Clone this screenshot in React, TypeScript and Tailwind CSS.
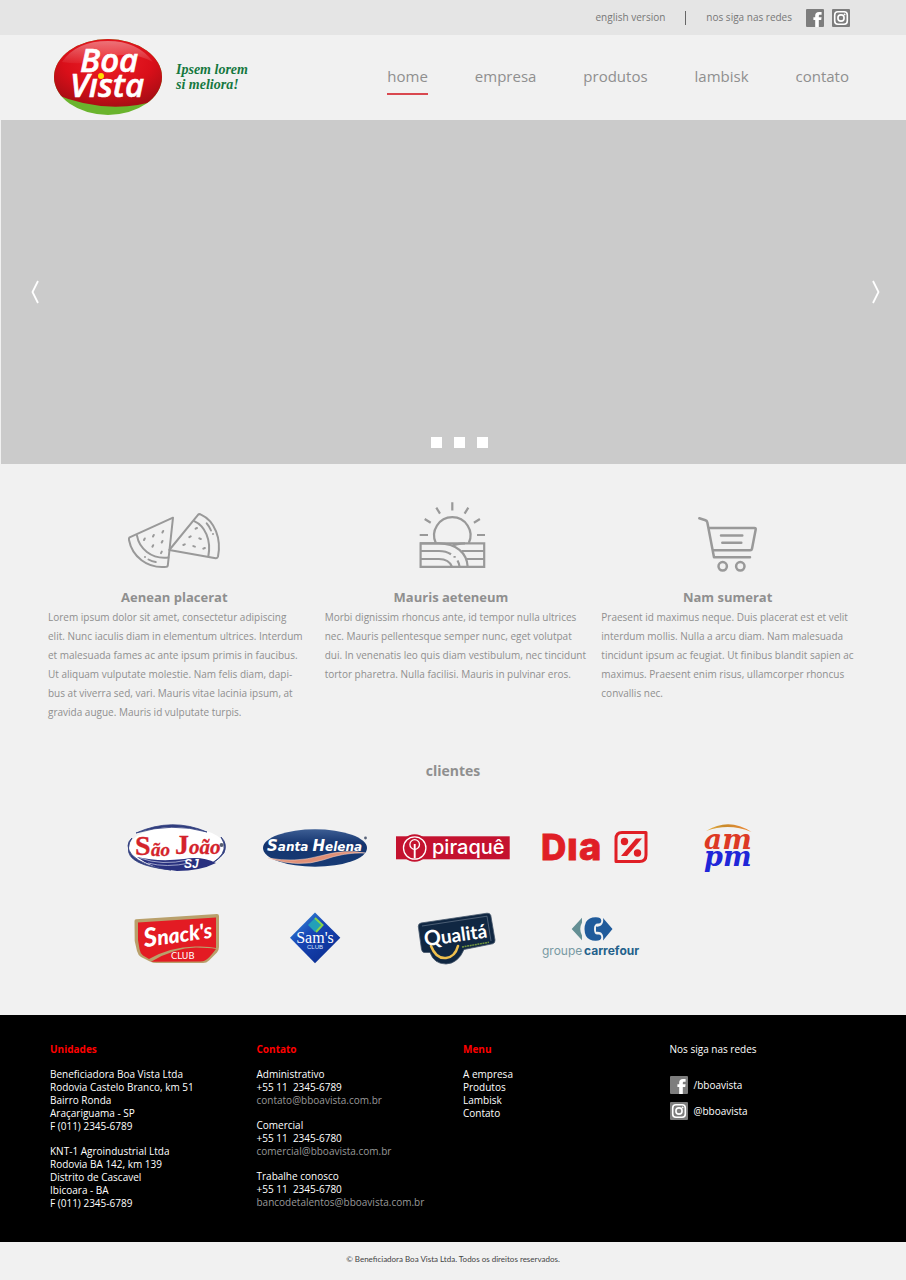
import React from "react";

function FacebookIcon() {
  return (
    <svg viewBox="0 0 18 18" className="size-[18px]" aria-hidden="true">
      <rect width="18" height="18" rx="1" fill="#7d7d7d" />
      <path d="M9.2 18V10.9H7.4V8.2H9.2V6.6C9.2 4.1 10.6 2.9 12.9 2.9H15.6V5.7H14C13.1 5.7 12.8 6.1 12.8 6.9V8.2H15.6L15.2 10.9H12.8V18Z" fill="#fff" />
    </svg>
  );
}

function InstagramIcon() {
  return (
    <svg viewBox="0 0 18 18" className="size-[18px]" aria-hidden="true">
      <rect width="18" height="18" rx="1" fill="#7d7d7d" />
      <rect x="2.7" y="2.7" width="12.6" height="12.6" rx="3.2" fill="none" stroke="#fff" strokeWidth="1.6" />
      <circle cx="9" cy="9" r="3.1" fill="none" stroke="#fff" strokeWidth="1.6" />
      <circle cx="12.6" cy="5.4" r="0.9" fill="#fff" />
    </svg>
  );
}

function BrandLogo() {
  return (
    <svg viewBox="53 38 110 78" className="h-[78px] w-[110px]" role="img" aria-label="Boa Vista">
      <defs>
        <radialGradient id="brandRed" cx="0.5" cy="0.35" r="0.65">
          <stop offset="0" stopColor="#ee2028" />
          <stop offset="0.6" stopColor="#d90f19" />
          <stop offset="1" stopColor="#a90d14" />
        </radialGradient>
        <linearGradient id="brandShine" x1="0" y1="0" x2="0" y2="1">
          <stop offset="0" stopColor="#fff" stopOpacity="0.4" />
          <stop offset="1" stopColor="#fff" stopOpacity="0.05" />
        </linearGradient>
        <clipPath id="brandClip">
          <ellipse cx="108" cy="77" rx="54" ry="38" />
        </clipPath>
      </defs>
      <g clipPath="url(#brandClip)">
        <rect x="53" y="38" width="110" height="78" fill="#6ab42d" />
        <path d="M50 35H166V98Q108 118 50 92Z" fill="url(#brandRed)" />
        <path d="M62 62Q76 41 108 41Q138 41 153 62Q130 50 108 58Q84 66 62 62Z" fill="url(#brandShine)" />
      </g>
      <text fill="#fff" className="font-['Open_Sans',sans-serif] font-semibold italic" stroke="#fff" strokeWidth="0.6">
        <tspan x="80" y="72" fontSize="33">Boa</tspan>
        <tspan x="70" y="97" fontSize="33">Vısta</tspan>
      </text>
      <circle cx="101" cy="76" r="3" fill="#ffe100" />
    </svg>
  );
}

function WatermelonIcon() {
  return (
    <svg viewBox="125 510 98 62" className="h-[62px] w-[98px]" fill="none" stroke="#999" strokeWidth="2" strokeLinecap="round" strokeLinejoin="round" aria-hidden="true">
      <path d="M173 517.7L129.6 537.4Q128.6 538.2 129 540C132 556 147 569 166.5 566.8Q167.6 566.6 167.8 565.5Z" />
      <path d="M137 535.7C139 548 151 559.5 168.3 557.5" />
      <path d="M144.8 538.5L144 540M153.8 535L153 536.5M163.2 531L162.4 532.5M153.2 545.2L152.4 546.7M162.5 541L161.7 542.5M161.8 551.6L161 553.1M145 557V557.1M148.5 559.5Q152 561.5 155.7 562.1" />
      <path d="M169.3 550L198 514.8Q199.2 513.6 201 514.6C215 521 221.5 539 218 556.5Q217.5 558.4 215.7 558.2Z" />
      <path d="M194.2 521.2C205 526 211.5 540 208.3 556.5" />
      <path d="M195.6 528.7L197 528M189.3 537.1L190.7 536.4M199.3 538.3L200.8 539M183.3 545L184.8 544.4M193.3 546.1L194.9 546.6M203.3 548.7L204.9 548M206.7 523.3Q209.5 526.5 211 530.5M213 534V534.1" />
    </svg>
  );
}

function SunriseFieldIcon() {
  return (
    <svg viewBox="415 500 73 72" className="h-[72px] w-[73px]" fill="none" stroke="#999" strokeWidth="2.2" aria-hidden="true">
      <path d="M436.8 543A18.2 18.2 0 1 1 469.8 543" />
      <path d="M420.7 535H429M478 535H486M453.3 502.3V510.5M437.3 507.7L441 513.7M469.3 507.7L465.6 513.7M425.7 519L431.7 522.7M480.9 519L474.9 522.7" />
      <path d="M421.6 543.3H485.2V566.8H421.6Z" />
      <path d="M421 543.3H440C457 543.3 468 553 468.7 566.8M452.5 546Q458 543.3 466 543.3" />
      <path d="M421 551H440Q447 551 452 554.2M455.6 556V557.8M458.5 560.5Q460.2 563.5 460.5 566.5M421 559H440Q450 559 453 566.8M462.5 551H485M467.5 559H485" />
    </svg>
  );
}

function CartIcon() {
  return (
    <svg viewBox="696 514 63 58" className="h-[58px] w-[63px]" fill="none" stroke="#999" strokeWidth="2.5" strokeLinecap="round" strokeLinejoin="round" aria-hidden="true">
      <path d="M699.3 518.3L705.5 520.2Q706.9 520.7 707.3 522.2L714 557.3H750M709 528H754.5Q756 528 755.7 529.5L752 548.8Q751.7 550.3 750.2 550.3H713M721 535.4H742.3M722.3 542.8H741.3" />
      <circle cx="722.7" cy="566.3" r="4.2" />
      <circle cx="740.3" cy="566.3" r="4.2" />
    </svg>
  );
}

function SaoJoaoLogo() {
  return (
    <svg viewBox="125 823 105 50" className="h-[50px] w-[105px]" role="img" aria-label="São João">
      <ellipse cx="177.3" cy="848.3" rx="49" ry="21.5" fill="#fff" />
      <path d="M136 833Q172 817 207 832Q172 822 136 833ZM132 838Q124 845 132 855Q144 867 171 870Q126 865 128.5 848Q129 842 132 838ZM221 837Q228 844 224 853Q217 862 206 866Q222 859 224 849Q225 843 221 837Z" fill="#303d7e" stroke="#303d7e" strokeWidth="0.8" />
      <path d="M137 857Q158 862 184 859Q202 856 216 863Q200 871 177 871Q152 869 137 857Z" fill="#29317f" />
      <path d="M140 858Q162 866 188 860M148 863Q166 868 190 863" stroke="#cfd2e8" strokeWidth="0.7" fill="none" />
      <text className="font-['Liberation_Serif',serif] font-bold" fill="#d4232b" stroke="#d4232b" strokeWidth="0.3">
        <tspan x="135" y="855" fontSize="28">S</tspan>
        <tspan x="151" y="856" fontSize="19" className="italic">ão</tspan>
        <tspan x="175" y="854" fontSize="28">J</tspan>
        <tspan x="189" y="854" fontSize="21" className="italic">oão</tspan>
      </text>
      <text x="184" y="868" fontSize="12" fill="#fff" className="font-['Liberation_Sans',sans-serif] font-bold italic">SJ</text>
      <circle cx="221.5" cy="845" r="2" fill="#596072" />
    </svg>
  );
}

function SantaHelenaLogo() {
  return (
    <svg viewBox="261 827 108 42" className="h-[42px] w-[108px]" role="img" aria-label="Santa Helena">
      <defs>
        <linearGradient id="helenaBlue" x1="0" y1="0" x2="0" y2="1">
          <stop offset="0" stopColor="#3d5e94" />
          <stop offset="0.4" stopColor="#14346e" />
          <stop offset="1" stopColor="#173b75" />
        </linearGradient>
      </defs>
      <ellipse cx="315" cy="848" rx="52" ry="18.8" fill="url(#helenaBlue)" />
      <path d="M268 858Q295 863 320 856Q345 849 365 853Q345 852 323 860Q298 868 268 858Z" fill="#e09077" stroke="#f4d9cf" strokeWidth="0.5" />
      <text x="267" y="851" className="font-['DejaVu_Sans',sans-serif] font-bold italic" fill="#fff" fontSize="12">
        <tspan fontSize="15">S</tspan>anta <tspan fontSize="15">H</tspan>elena
      </text>
      <circle cx="365.5" cy="838" r="1.4" fill="#59647a" />
    </svg>
  );
}

function PiraqueLogo() {
  return (
    <svg viewBox="395 832 116 32" className="h-[32px] w-[116px]" role="img" aria-label="piraquê">
      <rect x="396" y="836.3" width="113.7" height="23" fill="#c4122f" />
      <circle cx="414.7" cy="848" r="13.8" fill="#c4122f" />
      <circle cx="414.7" cy="848" r="11.2" fill="none" stroke="#fff" strokeWidth="1.3" />
      <circle cx="414.7" cy="844.5" r="4.8" fill="none" stroke="#fff" strokeWidth="1.3" />
      <path d="M414.7 844V858.5" stroke="#fff" strokeWidth="1.9" />
      <text x="432" y="853.5" fontSize="20" fill="#fff" className="font-['Inter',sans-serif] font-medium">piraquê</text>
    </svg>
  );
}

function DiaLogo() {
  return (
    <svg viewBox="532 818 118 60" className="h-[60px] w-[118px]" role="img" aria-label="Dia">
      <text className="font-['Inter',sans-serif] font-extrabold" fill="#e01f26" stroke="#e01f26" strokeWidth="0.8">
        <tspan x="541" y="860" fontSize="35">D</tspan>
        <tspan x="567" y="860" fontSize="38">ı</tspan>
        <tspan x="579" y="860" fontSize="38">a</tspan>
      </text>
      <path d="M622 832.5H646V855Q646 861.5 639.5 861.5H616V839Q616 832.5 622 832.5Z" fill="none" stroke="#e01f26" strokeWidth="3" strokeLinejoin="round" />
      <path d="M636 838.5H642L627 856H621Z" fill="#e01f26" />
      <circle cx="624.5" cy="841.5" r="3.7" fill="#e01f26" />
      <circle cx="637.5" cy="853" r="3.7" fill="#e01f26" />
    </svg>
  );
}

function AmpmLogo() {
  return (
    <svg viewBox="702 822 54 52" className="h-[52px] w-[54px]" role="img" aria-label="am pm">
      <defs>
        <linearGradient id="arcGold" x1="0" y1="0" x2="1" y2="0">
          <stop offset="0" stopColor="#eab54a" />
          <stop offset="0.4" stopColor="#c98a2b" />
          <stop offset="1" stopColor="#f08a3a" />
        </linearGradient>
      </defs>
      <path d="M706 831Q729 817 751.5 832Q729 822.5 706 831Z" fill="url(#arcGold)" />
      <text className="font-['DejaVu_Serif',serif] font-bold italic">
        <tspan x="704" y="849" fontSize="28" fill="#dd3924">am</tspan>
        <tspan x="704" y="866" fontSize="27" fill="#2026d8">pm</tspan>
      </text>
    </svg>
  );
}

function SnacksLogo() {
  return (
    <svg viewBox="132 912 90 55" className="h-[55px] w-[90px]" role="img" aria-label="Snack's Club">
      <path d="M134.5 922Q134.5 920.3 136 920.2L217 915Q219 915.2 219 917V948Q219 951 217 953.5L209 961.5Q206.5 964 203 964H158Q154 964.5 150 962.5L141 958Q138 956 137 952L134.7 942Z" fill="#b9a06b" />
      <path d="M138 923.5L216 918.5V949Q209 947 195 947.5Q170 948 149 960L143 956.5Q140 954 139.5 950L138 941Z" fill="#e31b23" />
      <path d="M151 962.7Q174 949 196 948.5Q208 948.5 216 950Q209 959.5 205 961.5Q203 962.7 199 962.5Z" fill="#e31b23" />
      <text transform="rotate(-8 146 949)" x="145" y="948" fontSize="21" className="font-['Lato',sans-serif] font-black italic" fill="#fff">
        <tspan fontSize="26">S</tspan>nack's
      </text>
      <text x="171" y="960" fontSize="9" fill="#fff" className="font-['DejaVu_Sans',sans-serif]">CLUB</text>
    </svg>
  );
}

function SamsLogo() {
  return (
    <svg viewBox="286 910 56 56" className="h-[56px] w-[56px]" role="img" aria-label="Sam's Club">
      <defs>
        <linearGradient id="samsBlue" x1="0" y1="0" x2="0.8" y2="1">
          <stop offset="0" stopColor="#3c9be0" />
          <stop offset="0.45" stopColor="#1745b5" />
          <stop offset="1" stopColor="#0a2c8e" />
        </linearGradient>
      </defs>
      <path d="M314 912.5L339.3 937.7L314 963.3L289 937.7Z" fill="url(#samsBlue)" />
      <path d="M314 918L321 925L314 932L307 925Z" fill="#23a0b8" />
      <path d="M314 918L321.5 925L315 932" fill="none" stroke="#86d44b" strokeWidth="2" />
      <text textAnchor="middle">
        <tspan x="314" y="943" fontSize="16" fill="#fff" className="font-['Liberation_Serif',serif]">Sam's</tspan>
        <tspan x="314" y="949" fontSize="6" fill="#d9e6ff" className="font-['Liberation_Sans',sans-serif]">CLUB</tspan>
      </text>
    </svg>
  );
}

function QualitaLogo() {
  return (
    <svg viewBox="408 910 90 56" className="h-[56px] w-[90px]" role="img" aria-label="Qualitá">
      <path d="M421 923L487 913.2Q490 912.8 490.8 915.5L495 940Q495.3 943 492.5 943.8L464 949.5Q458 963.5 446 964Q434 964 430 952.5L424 952.5Q422 952 421.5 949.5L418.3 926.5Q418.3 923.5 421 923Z" fill="#102742" stroke="#46576b" strokeWidth="0.8" />
      <path d="M422 926L487 916.2L491 941" fill="none" stroke="#738396" strokeWidth="0.6" />
      <path d="M431 946Q436 959 446 958Q455 957 458 946" fill="none" stroke="#efc04d" strokeWidth="2.6" strokeLinecap="round" />
      <text transform="rotate(-8 427 947)" x="425" y="946" fontSize="19" className="font-['Lato',sans-serif] font-bold" fill="#fff">
        <tspan fontSize="21">Q</tspan>ualitá
      </text>
      <path d="M462 947L489 942.3" stroke="#71963e" strokeWidth="1.5" strokeDasharray="2 0.6" />
    </svg>
  );
}

function CarrefourLogo() {
  return (
    <svg viewBox="541 914 102 50" className="h-[50px] w-[102px]" role="img" aria-label="groupe carrefour">
      <path d="M572.7 930L583 918.8V923.5Q579.5 930 583 936.5V941.3Z" fill="#648f94" />
      <path d="M587 923Q590 918 597 918.2Q602 918.2 602.3 921.5Q602.3 925 599 924.5Q595 924.5 595 930Q595 936 599 935.5Q602.3 935 602.3 938.5Q602 941.8 597 941.8Q590 942 587 937Q584 930 587 923Z" fill="#205b9b" />
      <path d="M604 919L613.5 930L604 941.5Q605 936 602 933.5Q600 932.5 597 932.8V927.5Q600 928 602 926.5Q605 924 604 919Z" fill="#205b9b" />
      <g className="font-['Inter',sans-serif]">
        <text x="543" y="955.5" fontSize="12" fill="#789aa3">groupe</text>
        <text x="585" y="955.5" fontSize="12" fill="#24618b" className="font-bold">carrefour</text>
      </g>
    </svg>
  );
}

const navItems = ["home", "empresa", "produtos", "lambisk", "contato"];

const features = [
  {
    title: "Aenean placerat",
    Icon: WatermelonIcon,
    text: "Lorem ipsum dolor sit amet, consectetur adipiscing\nelit. Nunc iaculis diam in elementum ultrices. Interdum\net malesuada fames ac ante ipsum primis in faucibus.\nUt aliquam vulputate molestie. Nam felis diam, dapi-\nbus at viverra sed, vari. Mauris vitae lacinia ipsum, at\ngravida augue. Mauris id vulputate turpis.",
  },
  {
    title: "Mauris aeteneum",
    Icon: SunriseFieldIcon,
    text: "Morbi dignissim rhoncus ante, id tempor nulla ultrices\nnec. Mauris pellentesque semper nunc, eget volutpat\ndui. In venenatis leo quis diam vestibulum, nec tincidunt\ntortor pharetra. Nulla facilisi. Mauris in pulvinar eros.",
  },
  {
    title: "Nam sumerat",
    Icon: CartIcon,
    text: "Praesent id maximus neque. Duis placerat est et velit\ninterdum mollis. Nulla a arcu diam. Nam malesuada\ntincidunt ipsum ac feugiat. Ut finibus blandit sapien ac\nmaximus. Praesent enim risus, ullamcorper rhoncus\nconvallis nec.",
  },
];

const clients = [
  SaoJoaoLogo,
  SantaHelenaLogo,
  PiraqueLogo,
  DiaLogo,
  AmpmLogo,
  SnacksLogo,
  SamsLogo,
  QualitaLogo,
  CarrefourLogo,
];

const units = [
  ["Beneficiadora Boa Vista Ltda", "Rodovia Castelo Branco, km 51", "Bairro Ronda", "Araçariguama - SP", "F (011) 2345-6789"],
  ["KNT-1 Agroindustrial Ltda", "Rodovia BA 142, km 139", "Distrito de Cascavel", "Ibicoara - BA", "F (011) 2345-6789"],
];

const contacts = [
  { area: "Administrativo", phone: "+55 11  2345-6789", email: "contato@bboavista.com.br" },
  { area: "Comercial", phone: "+55 11  2345-6780", email: "comercial@bboavista.com.br" },
  { area: "Trabalhe conosco", phone: "+55 11  2345-6780", email: "bancodetalentos@bboavista.com.br" },
];

export default function App() {
  return (
    <div className="bg-[#f1f1f1] font-['Open_Sans',sans-serif] text-[#8f8f8f]">
      <div className="flex h-[35px] items-center justify-end bg-[#e5e5e5] pr-14 text-[10px] text-[#777]">
        <a href="#english">english version</a>
        <span className="mx-5 h-[14px] w-px bg-[#666]" />
        <span>nos siga nas redes</span>
        <a href="#facebook" aria-label="Facebook" className="ml-[14px]"><FacebookIcon /></a>
        <a href="#instagram" aria-label="Instagram" className="ml-2"><InstagramIcon /></a>
      </div>

      <header className="flex h-[85px] items-center justify-between pr-[57px] pb-0.5 pl-[53px]">
        <a href="#home" className="flex items-center gap-[13px]">
          <BrandLogo />
          <span className="font-['Liberation_Serif',serif] text-sm leading-[15px] font-bold text-[#15783f] italic">
            Ipsem lorem<br />si meliora!
          </span>
        </a>
        <nav className="flex w-[58%] justify-between text-[15px] leading-[22px]">
          {navItems.map((item, i) => (
            <a key={item} href={`#${item}`} className={i === 0 ? "border-b-2 border-[#d9484f] py-1.5" : "border-b-2 border-transparent py-1.5"}>
              {item}
            </a>
          ))}
        </nav>
      </header>

      <section aria-label="Destaques" className="flex h-[344px] flex-col border-l border-[#f1f1f1] bg-[#cbcbcb]">
        <div className="flex flex-1 items-center justify-between pr-[26px] pl-[30px]">
          <button aria-label="Anterior">
            <svg viewBox="0 0 8 24" className="h-6 w-2" fill="none" stroke="#fff" strokeWidth="1.8"><path d="M7 1L1.5 12L7 23" /></svg>
          </button>
          <button aria-label="Próximo">
            <svg viewBox="0 0 8 24" className="h-6 w-2" fill="none" stroke="#fff" strokeWidth="1.8"><path d="M1 1L6.5 12L1 23" /></svg>
          </button>
        </div>
        <div className="-mt-[27px] flex justify-center gap-3 pb-4 pl-3">
          {[1, 2, 3].map((n) => (
            <button key={n} aria-label={`Slide ${n}`} className="size-[11px] bg-white" />
          ))}
        </div>
      </section>

      <section className="grid grid-cols-3 gap-6 pt-9 pr-[52px] pl-12">
        {features.map(({ title, Icon, text }) => (
          <article key={title}>
            <div className="flex h-[74px] items-end justify-center pb-0.5"><Icon /></div>
            <h2 className="mt-3 text-center text-[13px] leading-[22px] font-bold">{title}</h2>
            <p className="text-[10px] leading-[19px] whitespace-pre">{text}</p>
          </article>
        ))}
      </section>

      <section className="pt-9 pb-8">
        <h2 className="text-center text-sm leading-[26px] font-bold">clientes</h2>
        <ul className="mx-auto mt-[19px] grid max-w-[690px] grid-cols-5">
          {clients.map((Logo, i) => (
            <li key={i} className="flex h-[90px] items-center justify-center"><Logo /></li>
          ))}
        </ul>
      </section>

      <footer>
        <div className="grid min-h-[227px] grid-cols-4 bg-black pt-7 pr-[30px] pb-7 pl-[50px] text-[10px] leading-[13px] text-white">
          <div>
            <h3 className="font-bold text-[#f00]">Unidades</h3>
            {units.map((lines) => (
              <address key={lines[0]} className="mt-3 not-italic">
                {lines.map((line) => <div key={line}>{line}</div>)}
              </address>
            ))}
          </div>
          <div>
            <h3 className="font-bold text-[#f00]">Contato</h3>
            {contacts.map((c) => (
              <div key={c.area} className="mt-3">
                <div>{c.area}</div>
                <div className="whitespace-pre">{c.phone}</div>
                <a href={`mailto:${c.email}`} className="block text-[#999]">{c.email}</a>
              </div>
            ))}
          </div>
          <div>
            <h3 className="font-bold text-[#f00]">Menu</h3>
            <ul className="mt-3">
              {["A empresa", "Produtos", "Lambisk", "Contato"].map((m) => (
                <li key={m}><a href={`#${m}`}>{m}</a></li>
              ))}
            </ul>
          </div>
          <div>
            <h3>Nos siga nas redes</h3>
            <a href="#facebook" className="mt-5 flex items-center gap-1.5"><FacebookIcon />/bboavista</a>
            <a href="#instagram" className="mt-2 flex items-center gap-1.5"><InstagramIcon />@bboavista</a>
          </div>
        </div>
        <p className="pt-2.5 pb-3.5 text-center font-['Lato',sans-serif] text-[8px] leading-[14px] text-[#444]">
          © Beneficiadora Boa Vista Ltda. Todos os direitos reservados.
        </p>
      </footer>
    </div>
  );
}
